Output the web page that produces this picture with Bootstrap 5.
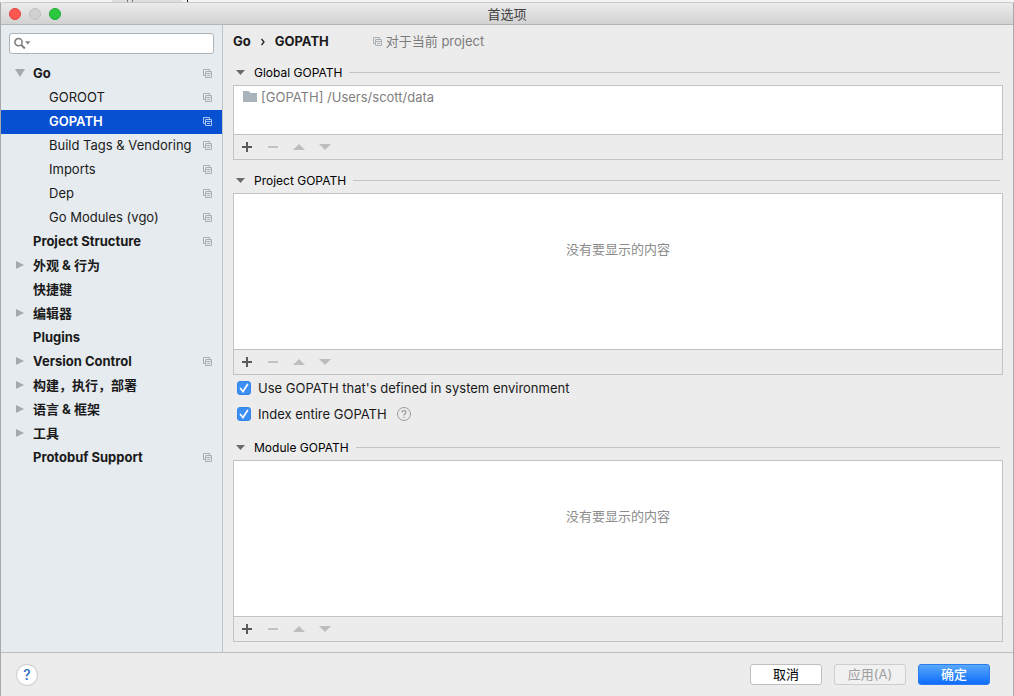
<!DOCTYPE html>
<html lang="zh-CN">
<head>
<meta charset="utf-8">
<meta name="viewport" content="width=device-width, initial-scale=1">
<title>首选项</title>
<link href="https://cdn.jsdelivr.net/npm/bootstrap@5.3.0/dist/css/bootstrap.min.css" rel="stylesheet">
<style>
body{font:13px/16px Inter,"Noto Sans CJK SC",sans-serif;color:#1a1a1a;background:#ececec}
.desktop-edge{height:2px;background:#f4f4f4;padding-left:112px}
.desktop-edge svg{display:block}
.win{border:1px solid #a9a9a9;border-top:0;border-bottom:0}
.titlebar{height:23px;background:linear-gradient(#ebebeb,#d2d2d2);border-bottom:1px solid #b5b5b5;border-top:1px solid #c9c9c9;border-radius:4px 4px 0 0;color:#404040}
.lights{gap:8px;left:8px;top:5px}
.light{width:12px;height:12px;border-radius:50%;border:1px solid #e0443e;background:#fc5753;padding:0}
.light.min{background:#d0d0d0;border-color:#c0c0c0}
.light.max{background:#2bc840;border-color:#1dab2e}
.sidebar{width:222px;background:#e6ebef;border-right:1px solid #bcc3c9}
.search{height:21px;margin:8px;border:1px solid #aeb3b7;border-radius:3px;background:#fff;padding-left:4px}
.search input{font-size:13px;outline:0;min-width:0}
.tree a{height:24px;padding:0 10px 2px 14px;color:#1a1a1a}
.tree .arrow{width:18px;flex:none}
.tree .child{padding-left:48px}
.tree .active{background:#0850d2;color:#fff;font-weight:600}
.copy{width:9px;height:9px;flex:none;color:#a9b0b5}
.active .copy{color:#a9c5f5}
.crumb{height:32px}
.main{padding:0 10px 10px}
.crumb .chev{margin:0 9px}
.crumb .here{min-width:58px}
.scope{color:#7b7b7b;gap:4px;margin-left:40px}
.sec{height:25px;margin-top:8px;font-size:12px;color:#000;padding:0 3px}
.sec.first{margin-top:3px}
.sec button{font-size:12px;gap:8px}
.sec hr{color:#c4c4c4;opacity:1;margin-left:7px}
.pane{border:1px solid #c2c2c2;background:#fff}
.pane .content{min-height:48px}
.pane .path{padding:3px 9px;gap:4px;color:#808080}
.empty{padding-top:47px;color:#8c8c8c}
.tools{height:25px;border-top:1px solid #c2c2c2;background:#ececec;padding-left:7px;gap:14px}
.tools button,.sec button,.round{border:0;background:none;padding:0;line-height:1}
.tools svg{display:block;width:12px;height:12px}
.check{height:26px;padding-left:4px;gap:7px}
.check .form-check-input{width:14px;height:14px;margin:0;border-radius:3px}
.check .form-check-input:checked{background-color:#3b8ff2;border-color:#3485ea;background-image:url("data:image/svg+xml,%3Csvg xmlns='http://www.w3.org/2000/svg' viewBox='0 0 12 12'%3E%3Cpath d='M2.500 6.500l2.500 3L9.500 2.500' fill='none' stroke='%23fff' stroke-width='1.700' stroke-linecap='round'/%3E%3C/svg%3E")}
.hint{color:#9b9b9b;margin-left:3px}
.foot{height:44px;border-top:1px solid #bdbdbd;padding:0 23px 0 16px}
.round{width:20px;height:20px;border-radius:50%;background:#fff;box-shadow:0 0 1px 1px #cfcfcf;color:#2d6bc0;font-size:14px;font-weight:500}
.actions{gap:12px}
.foot .btn{width:72px;height:21px;font-size:13px;line-height:16px;padding:0 0 2px;border-radius:3px;border:1px solid #bfbfbf;background:#fff;color:#000}
.foot .btn:disabled{background:#f1f1f1;color:#a0a0a0;border-color:#cdcdcd;opacity:1}
.foot .ok{background:linear-gradient(#58a8fb,#0f6cfa);border-color:#2b7cf0;color:#fff}
</style>
</head>
<body>
<svg class="d-none" xmlns="http://www.w3.org/2000/svg">
<symbol id="copy" viewBox="0 0 9 9"><path d="M2.500 6.500h-2v-6h6v2M2.500 2.500h6v6h-6zM2.500 4.500h6M4 6.500h3" fill="none" stroke="currentColor"/></symbol>
<symbol id="down" viewBox="0 0 10 10"><path d="M0 1h10L5 9z" fill="currentColor"/></symbol>
<symbol id="fold" viewBox="0 0 10 8"><path d="M0 1h9L4.500 6z" fill="currentColor"/></symbol>
<symbol id="right" viewBox="0 0 10 10"><path d="M1 1v8l8-4z" fill="#a6a9ab"/></symbol>
<symbol id="add" viewBox="0 0 12 12"><path d="M6 1v10M1 6h10" stroke="#5a5a5a" stroke-width="2"/></symbol>
<symbol id="sub" viewBox="0 0 12 12"><path d="M1 6h10" stroke="#c2c2c2" stroke-width="2"/></symbol>
<symbol id="mup" viewBox="0 0 12 12"><path d="M0 9h12L6 3z" fill="#bdbdbd"/></symbol>
<symbol id="mdn" viewBox="0 0 12 12"><path d="M0 3h12L6 9z" fill="#bdbdbd"/></symbol>
</svg>
<div class="d-flex flex-column min-vh-100">
<div class="desktop-edge"><svg width="80" height="2"><path d="M0 0h70v2H0z" fill="#dedede"/><path d="M15 0h1v2h-1zM20 0h1v2h-1z" fill="#777"/><path d="M75 0h1v2h-1z" fill="#111"/></svg></div>
<div class="win d-flex flex-column flex-grow-1">
<header class="titlebar position-relative d-flex align-items-center justify-content-center">
<div class="lights position-absolute d-flex"><button class="light" aria-label="关闭"></button><button class="light min" aria-label="最小化"></button><button class="light max" aria-label="缩放"></button></div>
<span>首选项</span>
</header>
<div class="d-flex flex-grow-1">
<nav class="sidebar flex-shrink-0">
<div class="search d-flex align-items-center">
<svg width="19" height="15" viewBox="0 0 19 15"><circle cx="5" cy="6" r="4" fill="none" stroke="#7d7d7d" stroke-width="1.700"/><path d="M8 9l4 4" stroke="#7d7d7d" stroke-width="2.200"/><path d="M12.500 5h5.500l-2.750 3.500z" fill="#7d7d7d"/></svg>
<input class="border-0 flex-grow-1 bg-transparent p-0" type="search" aria-label="搜索">
</div>
<div class="tree" id="tree"></div>
</nav>
<main class="main flex-grow-1 d-flex flex-column">
<div class="crumb d-flex align-items-center"><b class="fw-bold">Go</b><span class="chev"><svg width="6" height="10" viewBox="0 0 6 10"><path d="M1.500 2l2.500 3-2.500 3" fill="none" stroke="#222" stroke-width="1.300"/></svg></span><b class="here fw-bold">GOPATH</b>
<span class="scope d-flex align-items-center"><svg class="copy"><use href="#copy"/></svg>对于当前 project</span></div>

<div class="sec first d-flex align-items-center"><button class="d-flex align-items-center"><svg width="10" height="8" color="#6b6b6b"><use href="#fold"/></svg>Global GOPATH</button><hr class="flex-grow-1 my-0"></div>
<section class="pane"><div class="content"><div class="path d-flex align-items-center"><svg width="14" height="12" viewBox="0 0 14 12"><path d="M0 0h5.500l2 2H14v9H0z" fill="#a8b3bc"/></svg>[GOPATH] /Users/scott/data</div></div><div class="tools d-flex align-items-center"></div></section>

<div class="sec d-flex align-items-center"><button class="d-flex align-items-center"><svg width="10" height="8" color="#6b6b6b"><use href="#fold"/></svg>Project GOPATH</button><hr class="flex-grow-1 my-0"></div>
<section class="pane flex-grow-1 d-flex flex-column"><div class="content empty text-center flex-grow-1">没有要显示的内容</div><div class="tools d-flex align-items-center"></div></section>

<div class="check d-flex align-items-center"><input class="form-check-input" type="checkbox" id="env" checked><label for="env">Use GOPATH that's defined in system environment</label></div>
<div class="check d-flex align-items-center"><input class="form-check-input" type="checkbox" id="idx" checked><label for="idx">Index entire GOPATH</label><svg class="hint" width="14" height="14" viewBox="0 0 14 14" fill="none" stroke="currentColor"><circle cx="7" cy="7" r="6.500"/><path d="M5 5.500c0-2.700 4-2.500 4-.2C9 6.800 7 6.700 7 8.500M7 9.700v1.200" stroke-width="1.200"/></svg></div>

<div class="sec d-flex align-items-center"><button class="d-flex align-items-center"><svg width="10" height="8" color="#6b6b6b"><use href="#fold"/></svg>Module GOPATH</button><hr class="flex-grow-1 my-0"></div>
<section class="pane flex-grow-1 d-flex flex-column"><div class="content empty text-center flex-grow-1">没有要显示的内容</div><div class="tools d-flex align-items-center"></div></section>
</main>
</div>
<footer class="foot d-flex align-items-center">
<button class="round" aria-label="帮助">?</button>
<div class="actions d-flex ms-auto"><button class="btn">取消</button><button class="btn" disabled>应用(A)</button><button class="btn ok fw-medium">确定</button></div>
</footer>
</div>
</div>
<script src="https://cdn.jsdelivr.net/npm/bootstrap@5.3.0/dist/js/bootstrap.bundle.min.js"></script>
<script>
// [label, arrow, has project scope, child, active]
const items=[["Go","down",1],["GOROOT","",1,1],["GOPATH","",1,1,1],["Build Tags & Vendoring","",1,1],["Imports","",1,1],["Dep","",1,1],["Go Modules (vgo)","",1,1],["Project Structure","",1],["外观 & 行为","right"],["快捷键",""],["编辑器","right"],["Plugins",""],["Version Control","right",1],["构建，执行，部署","right"],["语言 & 框架","right"],["工具","right"],["Protobuf Support","",1]];
document.getElementById("tree").innerHTML=items.map(([t,a,s,c,on])=>
`<a href="#" class="d-flex align-items-center text-decoration-none ${c?"child":"fw-bold"} ${on?"active":""}">${c?"":`<span class="arrow d-flex">${a?`<svg width="10" height="10" color="#a6a9ab"><use href="#${a}"/></svg>`:""}</span>`}<span class="text-nowrap">${t.replace("&","&amp;")}</span>${s?'<svg class="copy ms-auto"><use href="#copy"/></svg>':""}</a>`).join("");
document.querySelectorAll(".tools").forEach(e=>e.innerHTML=[["add","添加"],["sub","移除"],["mup","上移"],["mdn","下移"]].map(([i,n])=>`<button aria-label="${n}" ${i=="add"?"":"disabled"}><svg><use href="#${i}"/></svg></button>`).join(""));
</script>
</body>
</html>
